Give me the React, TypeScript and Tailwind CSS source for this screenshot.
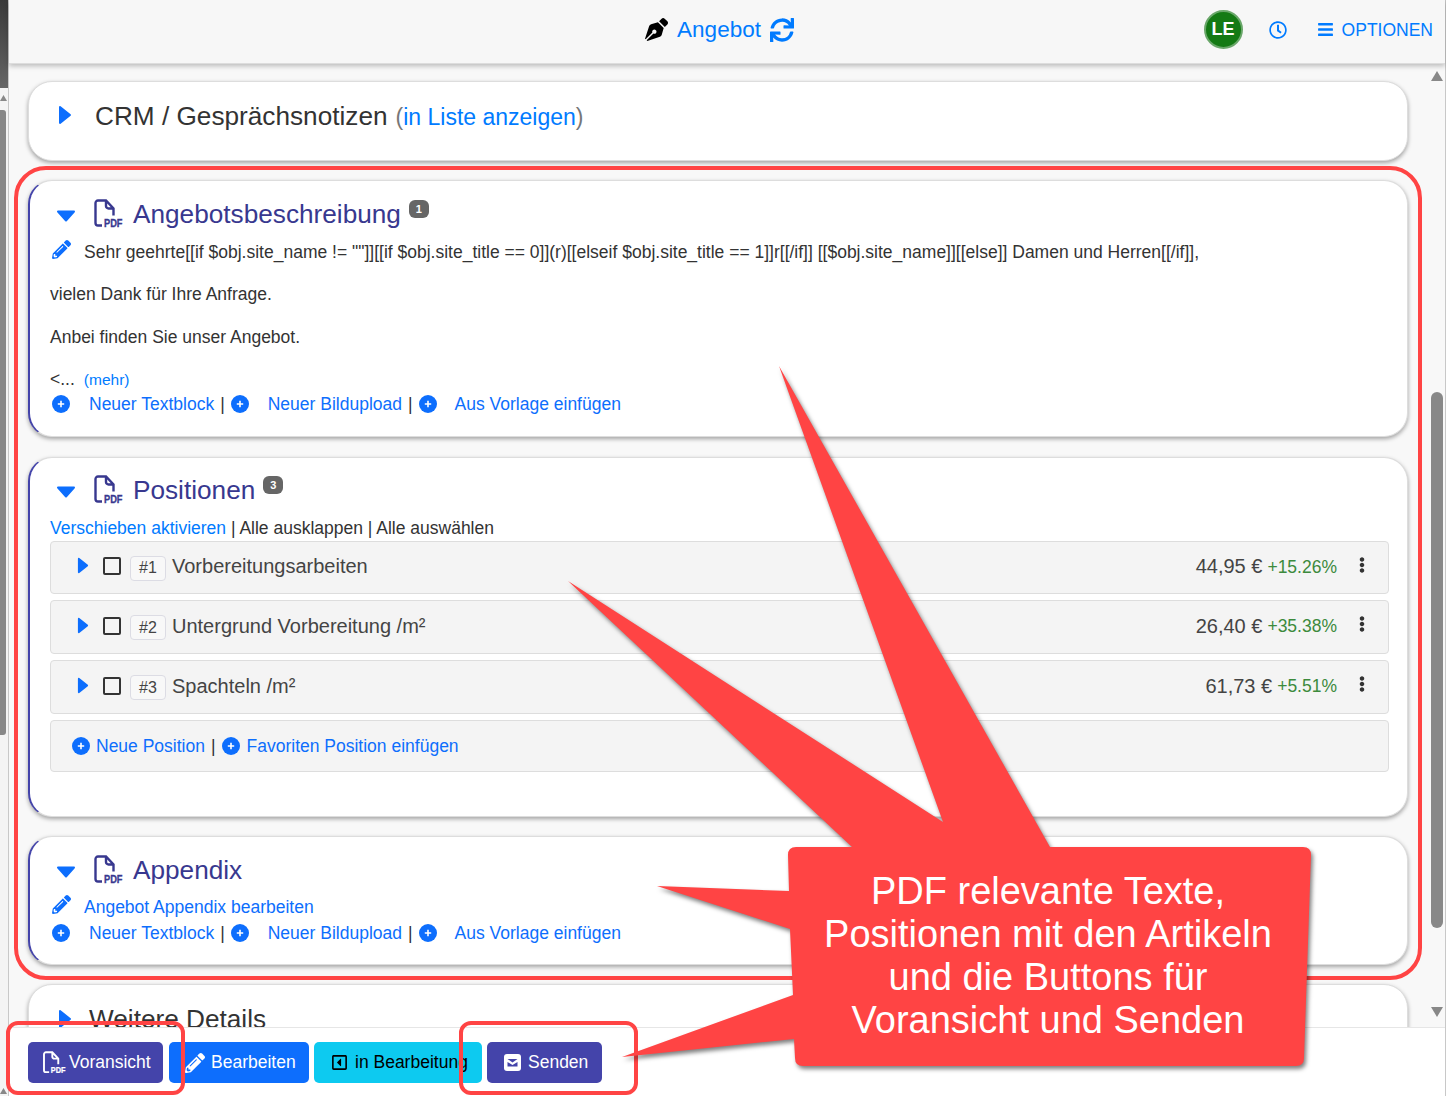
import React from "react";
import { FaPenNib, FaSync, FaRegClock, FaBars, FaPencilAlt, FaEllipsisV, FaRegCaretSquareLeft } from "react-icons/fa";

const Right = ({ cls = "w-[14px] h-[20px]" }: { cls?: string }) => (
  <svg viewBox="0 0 14 20" className={cls} fill="#0d6efd" stroke="#0d6efd" strokeWidth="2" strokeLinejoin="round">
    <path d="M2 2 L12 10 L2 18 Z" />
  </svg>
);
const Down = () => (
  <svg viewBox="0 0 20 12" className="w-[20px] h-[12px]" fill="#0d6efd" stroke="#0d6efd" strokeWidth="2" strokeLinejoin="round">
    <path d="M2 1.5 H18 L10 10.5 Z" />
  </svg>
);
const Plus = () => (
  <svg viewBox="0 0 18 18" className="w-[18px] h-[18px] shrink-0">
    <circle cx="9" cy="9" r="9" fill="#0d6efd" />
    <path d="M9 5.8 V12.2 M5.8 9 H12.2" stroke="#fff" strokeWidth="1.6" />
  </svg>
);
const Pdf = ({ color = "#38388f", cls = "w-[34px] h-[32px]" }: { color?: string; cls?: string }) => (
  <svg viewBox="0 -1 34 32" className={`${cls} shrink-0`} fill="none">
    <path d="M9 26.500 H5 a2.500 2.500 0 0 1 -2.500 -2.500 V4 A2.500 2.500 0 0 1 5 1.500 H13 L20.500 9.500 V16.500 M13 1.500 V7 a2.500 2.500 0 0 0 2.500 2.500 H20.500" stroke={color} strokeWidth="2.400" />
    <text x="11" y="28" fontSize="10.500" fontWeight="700" fontFamily="Liberation Sans" fill={color} stroke={color} strokeWidth="0.300" textLength="18.500" lengthAdjust="spacingAndGlyphs">PDF</text>
  </svg>
);
const Badge = ({ n }: { n: number }) => (
  <span className="ml-[8px] -mt-[10px] w-[20px] h-[18px] rounded-[6px] bg-[#666666] text-white text-[11px] font-bold flex items-center justify-center">{n}</span>
);
const SectionTitle = ({ title, badge, cls }: { title: string; badge?: number; cls: string }) => (
  <div className={`flex items-center ${cls}`}>
    <span className="w-[20px] ml-[6px] mr-[17px] flex justify-center mt-[3px]"><Down /></span>
    <Pdf />
    <span className="ml-[6px] text-[26.200px] leading-[36px] text-[#38388f]">{title}</span>
    {badge ? <Badge n={badge} /> : null}
  </div>
);
const Sep = () => <span className="text-[#333333] mx-[6px]">|</span>;
const Tools = () => (
  <div className="flex items-center h-[26px] text-[17.500px] text-[#0d6efd] pl-[2px]">
    <Plus />
    <span className="ml-[19px]">Neuer Textblock</span>
    <Sep />
    <Plus />
    <span className="ml-[19px]">Neuer Bildupload</span>
    <Sep />
    <Plus />
    <span className="ml-[18px]">Aus Vorlage einfügen</span>
  </div>
);
const Row = ({ n, name, price, pct, cls, textCls }: { n: number; name: string; price: string; pct: string; cls: string; textCls: string }) => (
  <div className={`flex items-center border border-[#dddddd] rounded-[4px] bg-[#f4f4f4] pl-[26px] pr-[21px] ${cls}`}>
    <Right cls="w-[12px] h-[17px] -mt-[4px]" />
    <span className="ml-[14px] w-[18px] h-[18px] border-2 border-[#333333] rounded-[2px] -mt-[3px]" />
    <span className="ml-[9px] w-[36px] h-[25px] border border-[#dcdce4] rounded-[4px] bg-[#f8f8f8] text-[#444444] text-[16px] flex items-center justify-center mt-[1px]">#{n}</span>
    <span className={`ml-[6px] text-[20px] text-[#444444] ${textCls}`}>{name}</span>
    <span className={`ml-auto text-[20px] text-[#444444] ${textCls}`}>{price}</span>
    <span className="ml-[5px] text-[17.500px] text-[#3c8a3c] -mt-[1px]">{pct}</span>
    <FaEllipsisV className="ml-[20px] w-[10px] h-[16px] text-[#333333] -mt-[6px]" />
  </div>
);
const Card = ({ accent, cls, children }: { accent?: boolean; cls: string; children: React.ReactNode }) => (
  <section className={`ml-[19px] mr-[21px] shrink-0 rounded-[24px] bg-white border border-[#dddddd] shadow-[0_2px_4px_rgba(0,0,0,0.35)] ${accent ? "border-l-2 border-l-[#4444aa]" : ""} ${cls}`}>
    {children}
  </section>
);
const Arrow = ({ up, cls }: { up?: boolean; cls: string }) => (
  <svg viewBox="0 0 12 10" className={cls} fill="#888888"><path d={up ? "M6 0 L12 10 H0 Z" : "M6 10 L12 0 H0 Z"} /></svg>
);
const Btn = ({ cls, children }: { cls: string; children: React.ReactNode }) => (
  <div className={`h-[41px] rounded-[5px] flex items-center text-[17.500px] shrink-0 ${cls}`}>{children}</div>
);

export default function App() {
  return (
    <div className="relative w-[1446px] h-[1096px] overflow-hidden flex bg-white font-['Liberation_Sans',Arial,sans-serif] text-[#333333]">
      {/* neighbouring window edge */}
      <div className="w-[9px] shrink-0 flex flex-col bg-[#f4f4f4] border-r border-[#c8c8c8]">
        <div className="h-[88px] bg-gradient-to-b from-[#3a3a3a] to-[#666666]" />
        <div className="h-[22px] pt-[6px]"><Arrow up cls="w-[7px] h-[8px]" /></div>
        <div className="w-[6px] h-[625px] rounded-r-[3px] bg-[#888888]" />
        <div className="mt-auto mb-[2px]"><Arrow up cls="w-[7px] h-[6px]" /></div>
      </div>

      <div className="flex-1 flex flex-col border-r border-[#c8c8c8] min-w-0">
        {/* header */}
        <header className="relative z-10 h-[64px] shrink-0 bg-[#f7f7f7] border-b border-[#dddddd] shadow-[0_2px_5px_rgba(0,0,0,0.25)] flex items-center pr-[12px]">
          <div className="flex-1" />
          <div className="flex items-center mr-[3px] text-[#007bff] -mt-[4px]">
            <FaPenNib className="w-[23px] h-[23px] text-black mr-[9px]" />
            <span className="text-[22.500px]">Angebot</span>
            <FaSync className="w-[24px] h-[24px] ml-[9px]" />
          </div>
          <div className="flex-1 flex items-center justify-end text-[#007bff] -mt-[4px]">
            <div className="w-[39px] h-[39px] rounded-full bg-[#147a14] border-2 border-[#6aa76a] text-white font-bold text-[18px] flex items-center justify-center">LE</div>
            <FaRegClock className="ml-[26px] w-[18px] h-[18px]" />
            <FaBars className="ml-[30px] w-[17px] h-[17px]" />
            <span className="ml-[8px] text-[17.500px] mt-[2px]">OPTIONEN</span>
          </div>
        </header>

        {/* scrolling area */}
        <div className="flex-1 min-h-0 flex bg-[#f8f8f8]">
          <main className="flex-1 min-w-0 overflow-hidden flex flex-col pt-[17px]">
            <Card cls="h-[80px] mb-[19px] flex items-start pt-[18px] pl-[29px]">
              <Right cls="w-[14px] h-[20px] mt-[5px]" />
              <span className="ml-[23px] text-[26.200px] leading-[32px] text-[#333333]">CRM / Gesprächsnotizen</span>
              <span className="ml-[8px] text-[23px] leading-[34px] text-[#777777]">(<span className="text-[#007bff]">in Liste anzeigen</span>)</span>
            </Card>

            <Card accent cls="h-[257px] mb-[20px] pl-[20px] pt-[15px]">
              <SectionTitle title="Angebotsbeschreibung" badge={1} cls="h-[36px]" />
              <div className="flex items-center h-[29px] mt-[6px] text-[17.500px]">
                <FaPencilAlt className="ml-[2px] w-[19px] h-[19px] text-[#0d6efd] -mt-[6px]" />
                <span className="ml-[13px]">Sehr geehrte[[if $obj.site_name != ""]][[if $obj.site_title == 0]](r)[[elseif $obj.site_title == 1]]r[[/if]] [[$obj.site_name]][[else]] Damen und Herren[[/if]],</span>
              </div>
              <p className="h-[29px] mt-[13px] leading-[29px] text-[17.500px]">vielen Dank für Ihre Anfrage.</p>
              <p className="h-[29px] mt-[14px] leading-[29px] text-[17.500px]">Anbei finden Sie unser Angebot.</p>
              <p className="h-[25px] mt-[14px] leading-[27px] text-[17.500px]">&lt;...<span className="ml-[9px] text-[#007bff] text-[15.500px]">(mehr)</span></p>
              <Tools />
            </Card>

            <Card accent cls="h-[360px] mb-[19px] pl-[20px] pr-[18px] pt-[14px]">
              <SectionTitle title="Positionen" badge={3} cls="h-[36px]" />
              <div className="h-[26px] mt-[7px] leading-[26px] text-[17.500px] text-[#333333]">
                <span className="text-[#007bff]">Verschieben aktivieren</span> | Alle ausklappen | Alle auswählen
              </div>
              <Row n={1} name="Vorbereitungsarbeiten" price="44,95 €" pct="+15.26%" cls="h-[53px]" textCls="-mt-[3px]" />
              <Row n={2} name="Untergrund Vorbereitung /m²" price="26,40 €" pct="+35.38%" cls="h-[54px] mt-[6px]" textCls="-mt-[2px]" />
              <Row n={3} name="Spachteln /m²" price="61,73 €" pct="+5.51%" cls="h-[54px] mt-[6px]" textCls="-mt-[2px]" />
              <div className="h-[52px] mt-[6px] flex items-center border border-[#dddddd] rounded-[4px] bg-[#f4f4f4] pl-[21px] text-[17.500px] text-[#0d6efd]">
                <Plus />
                <span className="ml-[6px]">Neue Position</span>
                <Sep />
                <Plus />
                <span className="ml-[7px]">Favoriten Position einfügen</span>
              </div>
            </Card>

            <Card accent cls="h-[129px] mb-[19px] pl-[20px] pt-[15px]">
              <SectionTitle title="Appendix" cls="h-[36px]" />
              <div className="flex items-center h-[25px] mt-[7px] text-[17.500px] text-[#0d6efd]">
                <FaPencilAlt className="ml-[2px] w-[19px] h-[19px] -mt-[6px]" />
                <span className="ml-[13px]">Angebot Appendix bearbeiten</span>
              </div>
              <Tools />
            </Card>

            <Card cls="h-[80px] flex items-start pt-[18px] pl-[29px]">
              <Right cls="w-[14px] h-[20px] mt-[6px]" />
              <span className="ml-[17px] text-[26.200px] leading-[32px] text-[#333333]">Weitere Details</span>
            </Card>
          </main>
          <aside className="w-[16px] shrink-0 flex flex-col items-center bg-[#f8f8f8]">
            <Arrow up cls="w-[12px] h-[10px] mt-[7px]" />
            <div className="w-[12px] h-[536px] mt-[311px] rounded-[6px] bg-[#888888]" />
            <Arrow cls="w-[12px] h-[10px] mt-auto mb-[10px]" />
          </aside>
        </div>

        {/* footer */}
        <footer className="relative z-10 h-[69px] shrink-0 bg-white border-t border-[#e6e6e6] flex items-start pt-[14px] pl-[19px] gap-[6px]">
          <Btn cls="w-[135px] bg-[#4444aa] text-white pl-[14px]">
            <Pdf color="#ffffff" cls="w-[27px] h-[26px]" />
            <span>Voransicht</span>
          </Btn>
          <Btn cls="w-[140px] bg-[#0d6efd] text-white pl-[16px]">
            <FaPencilAlt className="w-[20px] h-[20px]" />
            <span className="ml-[6px]">Bearbeiten</span>
          </Btn>
          <Btn cls="w-[168px] bg-[#0dcaf0] text-black pl-[17px] -ml-[1px]">
            <FaRegCaretSquareLeft className="w-[17px] h-[17px]" />
            <span className="ml-[7px] whitespace-nowrap">in Bearbeitung</span>
          </Btn>
          <Btn cls="w-[115px] bg-[#4444aa] text-white pl-[17px] -ml-[1px]">
            <svg viewBox="0 0 17 17" className="w-[17px] h-[17px]">
              <rect width="17" height="17" rx="3" fill="#fff" />
              <path d="M3.500 5 H13.500 L8.500 8.500 Z" fill="#4444aa" />
              <path d="M3.500 8 L8.500 11 L13.500 8 V12.500 H3.500 Z" fill="#4444aa" />
            </svg>
            <span className="ml-[7px]">Senden</span>
          </Btn>
        </footer>
      </div>

      {/* annotation layer drawn over the screenshot */}
      <div className="absolute z-20 left-[14px] top-[166px] w-[1408px] h-[814px] border-4 border-[#ff4444] rounded-[32px]" />
      <div className="absolute z-20 left-[6px] top-[1021px] w-[179px] h-[74px] border-4 border-[#ff4444] rounded-[12px]" />
      <div className="absolute z-20 left-[459px] top-[1021px] w-[179px] h-[74px] border-4 border-[#ff4444] rounded-[12px]" />
      <svg viewBox="0 0 1446 1096" className="absolute z-30 left-0 top-0 w-[1446px] h-[1096px] drop-shadow-[2px_3px_2px_rgba(0,0,0,0.5)]">
        <path
          fill="#ff4444"
          d="M796 847 L852 847 L568 581 L943 822 L779 366 L1050 847 L1303 847 Q1311 847 1311 855 L1304 1058 Q1304 1066 1296 1066 L803 1066 Q795 1066 795 1058 L794 1039 L622 1057 L793 995 L790 929 L657 886 L789 891 L788 855 Q788 847 796 847 Z"
        />
      </svg>
      <div className="absolute z-40 left-[788px] top-[870px] w-[520px] text-center text-white text-[38px] leading-[43px]">
        PDF relevante Texte,<br />Positionen mit den Artikeln<br />und die Buttons für<br />Voransicht und Senden
      </div>
    </div>
  );
}
